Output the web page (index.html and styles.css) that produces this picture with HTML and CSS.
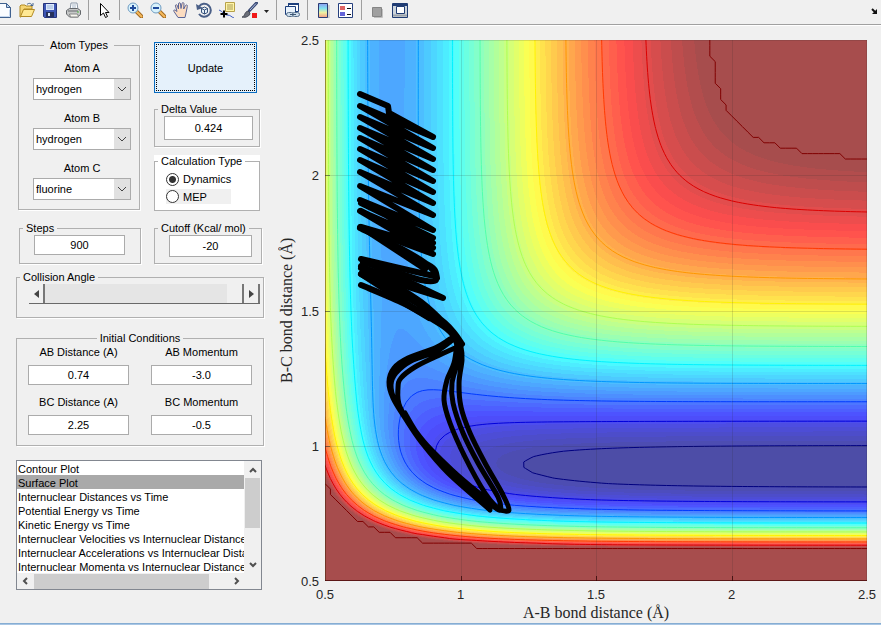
FILE: index.html
```html
<!DOCTYPE html>
<html lang="en">
<head>
<meta charset="utf-8">
<title>Reaction Dynamics</title>
<link rel="stylesheet" href="styles.css">
</head>
<body>
<header class="toolbar">
  <button class="tool" aria-label="New figure"><svg viewBox="0 0 16 16"><path d="M2.500 1.500h8l4 4v10h-12z" fill="#fafcff" stroke="#40618f"/><path d="M10.500 1.500v4h4z" fill="#bcd3ee" stroke="#40618f"/><path d="M4 14.500h9.500v-7" fill="none" stroke="#c5d7ee"/></svg></button>
  <button class="tool" aria-label="Open file"><svg viewBox="0 0 16 16"><path d="M1 4l1-1h4l1 1h6v3H5l-3 8H1z" fill="#f5d573" stroke="#b28b25"/><path d="M1.500 14.500l3-7h11l-3 7z" fill="#ffe994" stroke="#b28b25"/><path d="M8 2.500c2-2 4-1 5 .5m1-2v2.500h-2.500" fill="none" stroke="#46658e"/></svg></button>
  <button class="tool" aria-label="Save figure"><svg viewBox="0 0 16 16"><path d="M1.500 1.500h13v14h-12l-1-1z" fill="#3d56b5" stroke="#26357b"/><path d="M4 2h8v6H4z" fill="#dce9fb"/><path d="M5 4h6M5 6h6" stroke="#9bb4da"/><path d="M4 10h8v5H4z" fill="#26315c"/><path d="M6 11h2v3H6z" fill="#dce9fb"/></svg></button>
  <button class="tool" aria-label="Print figure"><svg viewBox="0 0 16 16"><path d="M5 8L6 1h6l1 7z" fill="#fff" stroke="#8b98a8"/><path d="M7 3h4M7 5h4" stroke="#a8b8ca"/><path d="M1.500 8.500l3-2h8l3 2v4l-3 2.500h-8l-3-3z" fill="#c6c8c8" stroke="#65686c"/><path d="M3 9h10M4 12.500h8" stroke="#66696d"/><path d="M4.500 12h8l1 3h-8z" fill="#f7f7ef" stroke="#888"/><path d="M12 10h2" stroke="#50b840"/></svg></button>
  <span class="sep"></span>
  <button class="tool" aria-label="Edit plot"><svg viewBox="0 0 16 16"><path d="M4.500 1.500v12l3-2.500 2 4.500 2-1-2-4h3.500z" fill="#fff" stroke="#000"/></svg></button>
  <span class="sep"></span>
  <button class="tool" aria-label="Zoom in"><svg viewBox="0 0 16 16"><path d="M9.500 9.500l5 5" stroke="#a36a20" stroke-width="4" stroke-linecap="round"/><path d="M9.500 9.500l5 5" stroke="#f5b95c" stroke-width="2" stroke-linecap="round"/><circle cx="6" cy="6" r="5" fill="#d8f2fc" stroke="#6f9cc2"/><path d="M3 6h6M6 3v6" stroke="#204b9c" stroke-width="2"/></svg></button>
  <button class="tool" aria-label="Zoom out"><svg viewBox="0 0 16 16"><path d="M9.500 9.500l5 5" stroke="#a36a20" stroke-width="4" stroke-linecap="round"/><path d="M9.500 9.500l5 5" stroke="#f5b95c" stroke-width="2" stroke-linecap="round"/><circle cx="6" cy="6" r="5" fill="#d8f2fc" stroke="#6f9cc2"/><path d="M3 6h6" stroke="#204b9c" stroke-width="2"/></svg></button>
  <button class="tool" aria-label="Pan"><svg viewBox="0 0 16 16"><path d="M5 15.500L1 9.500C0 7.500 2 7.500 4 9.500L2.500 4c-.3-1.700 1.500-1.700 2 0l1 3L5.500 2c0-1.700 2-1.700 2 0l.5 4.500L9 1.500c.3-1.500 2-1.200 2 .5l-.3 5L12.500 3.500c1-1.200 2.200-.5 1.800 1L13 11l-1 4.500z" fill="#fcdcc0" stroke="#5a6597"/></svg></button>
  <button class="tool" aria-label="Rotate 3D"><svg viewBox="0 0 16 16"><path d="M3 4.500A6.500 6.500 0 1 1 3 12" fill="none" stroke="#4a5f87" stroke-width="2"/><path d="M0 2l1 6 6-2z" fill="#4a5f87"/><path d="M5.500 6.500l3-1.500 3 1.500v4l-3 1.500-3-1.500zM5.500 6.500l3 1.500 3-1.500M8.500 8v4" fill="#e6f0f8" stroke="#36527c"/></svg></button>
  <button class="tool" aria-label="Data cursor"><svg viewBox="0 0 16 16"><path d="M6.500.5h9v9h-9z" fill="#fff6a8" stroke="#b7a14a"/><path d="M8 3h6M8 5h6M8 7h6" stroke="#a99b58"/><path d="M0 8c4 1 4 5 8 5s4 2 7 3" fill="none" stroke="#3857c0"/><path d="M5 8.500v7M1.500 12h7" stroke="#000" stroke-width="2"/></svg></button>
  <button class="tool" aria-label="Brush data"><svg viewBox="0 0 16 16"><path d="M14.500 1L7.500 8.500" stroke="#3a4a74" stroke-width="3" stroke-linecap="round"/><path d="M14 1.500L8 8" stroke="#aebde0"/><path d="M0 15c3 0 2-5 6-6l2 2c0 3-4 5-8 4z" fill="#6a6e78" stroke="#454954"/><path d="M10 11h5v5h-5z" fill="#f01818"/></svg></button>
  <button class="tool tool-caret" aria-label="Brush colors"><svg viewBox="0 0 6 16"><path d="M0 8h5L2.500 11z" fill="#222"/></svg></button>
  <span class="sep"></span>
  <button class="tool" aria-label="Link plot"><svg viewBox="0 0 16 16"><path d="M4.500 1.500h10v8h-10z" fill="#fff" stroke="#1c3f7c"/><path d="M4 2h11" stroke="#1c3f7c" stroke-width="2"/><path d="M1.500 4.500h10v8h-10z" fill="#eaf3fc" stroke="#1c3f7c"/><rect x="2.500" y="10.500" width="7" height="4" rx="2" fill="#cdddeb" stroke="#56708c"/><rect x="8.500" y="10.500" width="7" height="4" rx="2" fill="#cdddeb" stroke="#56708c"/><path d="M6 12.500h6" stroke="#3f5873"/></svg></button>
  <span class="sep"></span>
  <button class="tool" aria-label="Insert colorbar"><svg viewBox="0 0 16 16"><defs><linearGradient id="bar" x2="0" y2="1"><stop offset="0" stop-color="#8e9df2"/><stop offset=".35" stop-color="#82e2f0"/><stop offset=".65" stop-color="#eef0a0"/><stop offset="1" stop-color="#f39a86"/></linearGradient></defs><path d="M4 16h10V3" fill="none" stroke="#b5b5b5"/><path d="M3.500 1.500h9v14h-9z" fill="url(#bar)" stroke="#2b3c72"/></svg></button>
  <button class="tool" aria-label="Insert legend"><svg viewBox="0 0 16 16"><path d="M.5 1.500h14v14H.5z" fill="#fff" stroke="#26407e"/><path d="M2 4h5v4H2z" fill="#de6464"/><path d="M2 10h5v4H2z" fill="#6464d8"/><path d="M9 6.500h4M9 12.500h4" stroke="#111"/></svg></button>
  <span class="sep"></span>
  <button class="tool" aria-label="Hide plot tools"><svg viewBox="0 0 16 16"><path d="M3.500 5.500h9v9h-9z" fill="#a0a0a0" stroke="#858585"/><path d="M13.500 7v8.500H5" fill="none" stroke="#c0c0c0"/></svg></button>
  <button class="tool" aria-label="Show plot tools and dock figure"><svg viewBox="0 0 16 16"><path d="M.5 1.500h15v14H.5z" fill="#cdd5dc" stroke="#203c73"/><path d="M0 3h16" stroke="#203c73" stroke-width="2"/><path d="M4.500 4.500h8v7h-8z" fill="#fff" stroke="#203c73"/><path d="M1 13.500h14" stroke="#9ca3aa" stroke-width="2"/></svg></button>
  <button class="tool dock" aria-label="Dock figure"><svg viewBox="0 0 16 16"><path d="M7 7l3 3" stroke="#111" stroke-width="2"/><path d="M12 7v5H7z" fill="#111"/></svg></button>
</header>

<main class="window">
  <form class="controls">
    <div class="top">
      <fieldset class="atoms">
        <legend>Atom Types</legend>
        <div class="body">
          <div class="atom">
            <label for="atomA">Atom A</label>
            <span class="drop"><select id="atomA"><option>hydrogen</option></select><span class="arrow"><svg viewBox="0 0 10 6"><path d="M1 1l4 4 4-4"/></svg></span></span>
          </div>
          <div class="atom">
            <label for="atomB">Atom B</label>
            <span class="drop"><select id="atomB"><option>hydrogen</option></select><span class="arrow"><svg viewBox="0 0 10 6"><path d="M1 1l4 4 4-4"/></svg></span></span>
          </div>
          <div class="atom">
            <label for="atomC">Atom C</label>
            <span class="drop"><select id="atomC"><option>fluorine</option></select><span class="arrow"><svg viewBox="0 0 10 6"><path d="M1 1l4 4 4-4"/></svg></span></span>
          </div>
        </div>
      </fieldset>
      <div class="side">
        <button type="button" class="update"><span>Update</span></button>
        <fieldset class="delta">
          <legend>Delta Value</legend>
          <div class="body"><input class="field" type="text" value="0.424" aria-label="Delta value"></div>
        </fieldset>
        <fieldset class="calc">
          <legend>Calculation Type</legend>
          <div class="body">
            <label class="choice"><input type="radio" name="calc" checked>Dynamics</label>
            <label class="choice choice-plain"><input type="radio" name="calc">MEP</label>
          </div>
        </fieldset>
      </div>
    </div>
    <div class="pair">
      <fieldset>
        <legend>Steps</legend>
        <div class="body"><input class="field" type="text" value="900" aria-label="Steps"></div>
      </fieldset>
      <fieldset class="cutoff">
        <legend>Cutoff (Kcal/ mol)</legend>
        <div class="body"><input class="field" type="text" value="-20" aria-label="Cutoff"></div>
      </fieldset>
    </div>
    <fieldset class="angle">
      <legend>Collision Angle</legend>
      <div class="slider">
        <button type="button" aria-label="Decrease angle"><svg viewBox="0 0 5 8"><path d="M5 0v8L0 4z"/></svg></button>
        <input type="range" min="0" max="180" value="180" aria-label="Collision angle">
        <button type="button" aria-label="Increase angle"><svg viewBox="0 0 5 8"><path d="M0 0v8l5-4z"/></svg></button>
      </div>
    </fieldset>
    <fieldset class="initial">
      <legend>Initial Conditions</legend>
      <div class="conditions">
        <label>AB Distance (A)<input class="field" type="text" value="0.74"></label>
        <label>AB Momentum<input class="field" type="text" value="-3.0"></label>
        <label>BC Distance (A)<input class="field" type="text" value="2.25"></label>
        <label>BC Momentum<input class="field" type="text" value="-0.5"></label>
      </div>
    </fieldset>
    <div class="list">
      <select size="8" aria-label="Plot type">
        <option>Contour Plot</option>
        <option selected>Surface Plot</option>
        <option>Internuclear Distances vs Time</option>
        <option>Potential Energy vs Time</option>
        <option>Kinetic Energy vs Time</option>
        <option>Internuclear Velocities vs Internuclear Distance</option>
        <option>Internuclear Accelerations vs Internuclear Distance</option>
        <option>Internuclear Momenta vs Internuclear Distance</option>
      </select>
      <div class="vbar"><svg viewBox="0 0 8 6"><path d="M1 5l3-3 3 3"/></svg><i></i><svg viewBox="0 0 8 6"><path d="M1 1l3 3 3-3"/></svg></div>
      <div class="hbar"><svg viewBox="0 0 6 8"><path d="M5 1L2 4l3 3"/></svg><i></i><svg viewBox="0 0 6 8"><path d="M1 1l3 3-3 3"/></svg></div>
    </div>
  </form>

  <section class="chart">
    <div class="ylabel">B-C bond distance (Å)</div>
    <div class="yticks"><span>2.5</span><span>2</span><span>1.5</span><span>1</span><span>0.5</span></div>
    <canvas id="surface"></canvas>
    <div class="xticks"><span>0.5</span><span>1</span><span>1.5</span><span>2</span><span>2.5</span></div>
    <div class="xlabel">A-B bond distance (Å)</div>
  </section>
</main>
<footer class="edge"></footer>
<script src="plot.js"></script>
</body>
</html>
```

FILE: styles.css
```css
* { box-sizing: border-box; }
body {
  margin: 0;
  min-height: 100vh;
  display: flex;
  flex-direction: column;
  background: #f0f0f0;
  color: #000;
  font: 11px/14px "Liberation Sans", Arial, sans-serif;
  overflow-x: hidden;
}
button, input, select { font: inherit; color: inherit; margin: 0; }

.toolbar {
  display: flex;
  height: 26px;
  margin-left: -8px;
  padding-bottom: 5px;
  border-bottom: 1px solid #fff;
  box-shadow: inset 0 -1px #a0a0a0;
}
.tool { width: 23px; padding: 0; border: 0; background: none; display: grid; place-items: center; flex: none; }
.tool svg { width: 16px; height: 16px; }
.tool-caret { width: 11px; }
.tool-caret svg { width: 6px; }
.dock { margin-left: auto; width: 16px; }
.sep { width: 8px; background: linear-gradient(#a0a0a0, #a0a0a0) center / 1px 100% no-repeat; }

.window { flex: 1; display: grid; grid-template-columns: 264px minmax(0, 1fr); }
.controls { padding: 12px 0 0 16px; }

fieldset {
  margin: 0;
  padding: 0;
  min-width: 0;
  border: 1px solid #b0b0b0;
  box-shadow: 1px 1px #fff;
}
legend { padding: 0 3px; margin-left: 3px; white-space: nowrap; }
.field {
  display: block;
  width: 100%;
  height: 22px;
  padding: 0;
  border: 1px solid #ababab;
  background: #fff;
  text-align: center;
}

.top { display: grid; grid-template-columns: 124px 106px; gap: 14px; }
.atoms { height: 172px; margin-left: 2px; }
.atoms .body { padding: 9px 8px 0 14px; }
.atoms legend { margin: 0 auto; padding: 0 6px; }
.atom { display: grid; gap: 3px; margin-bottom: 11px; text-align: center; }
.drop { display: grid; grid-template-columns: 1fr 17px; height: 22px; }
.drop select {
  grid-area: 1 / 1 / 2 / 3;
  appearance: none;
  padding: 0 2px;
  border: 1px solid #ababab;
  border-radius: 0;
  background: #fff;
}
.arrow {
  grid-area: 1 / 2;
  display: grid;
  place-items: center;
  border: 1px solid #ababab;
  border-left: 0;
  background: #e1e1e1;
  pointer-events: none;
}
.arrow svg { width: 10px; height: 6px; fill: none; stroke: #444; }

.side { display: flex; flex-direction: column; padding-top: 4px; }
.update {
  height: 51px;
  margin-right: 3px;
  padding: 1px;
  border: 1px solid #0a6cc0;
  background: #e5f1fb;
}
.update span { display: grid; place-items: center; height: 100%; border: 1px dotted #000; }
.delta { height: 45px; margin-top: 9px; }
.delta .body { padding: 0 6px 0 9px; }
.delta .field { height: 24px; }
.calc { height: 57px; margin-top: 7px; background: #fff; box-shadow: 0 -6px #fff; }
.calc .body { padding: 3px 10px 0 11px; }
.choice { display: flex; align-items: center; gap: 4px; height: 16px; margin-bottom: 2px; }
.choice-plain { width: 65px; height: 15px; background: #f0f0f0; }
.choice input {
  appearance: none;
  width: 13px;
  height: 13px;
  border: 1px solid #333;
  border-radius: 50%;
  background: #fff;
}
.choice input:checked { background: radial-gradient(circle, #333 3px, #fff 4px); }

.pair { display: grid; grid-template-columns: 122px 108px; gap: 13px; margin: 10px 0 0 3px; }
.pair fieldset { height: 43px; }
.pair .body { padding: 0 15px 0 14px; }
.pair .cutoff .body { padding: 0 9px 0 14px; }
.pair .field { height: 20px; }
.pair .cutoff .field { height: 22px; }

.angle { height: 48px; margin-top: 6px; }
.slider { display: grid; grid-template-columns: 16px 1fr 16px; height: 20px; margin: 0 3px 0 12px; border-bottom: 1px solid #696969; }
.slider button {
  display: grid;
  place-items: center;
  padding: 0;
  border: 0;
  border-right: 2px solid #777;
  background: #f0f0f0;
}
.slider svg { width: 5px; height: 8px; fill: #444; }
.slider input { appearance: none; width: 100%; height: 19px; background: #e5e5e5; }
.slider input::-webkit-slider-thumb { appearance: none; width: 17px; height: 19px; background: #f0f0f0; border-right: 2px solid #777; }

.initial { height: 115px; margin-top: 13px; }
.initial legend { margin: 0 auto; }
.conditions { display: grid; grid-template-columns: 101px 101px; gap: 10px 22px; padding: 0 11px; }
.conditions label { display: grid; gap: 6px; text-align: center; }
.conditions .field { height: 20px; }

.list {
  display: grid;
  grid-template: 112px 16px / 1fr 17px;
  width: 246px;
  margin-top: 14px;
  border: 1px solid #828790;
  background: #f0f0f0;
}
.list select { padding: 0; border: 0; border-radius: 0; outline: 0; background: #fff; overflow: hidden; scrollbar-width: none; min-width: 0; height: 112px; }
.list option { padding: 2px 1px 0; min-height: 14px; height: 14px; line-height: 12px; }
.list option:checked { background: #a9a9a9 linear-gradient(#a9a9a9, #a9a9a9); color: #000; }
.list svg { fill: none; stroke: #505050; stroke-width: 2; }
.vbar { display: flex; flex-direction: column; align-items: center; gap: 5px; padding: 6px 0 5px; }
.vbar svg { width: 8px; height: 6px; }
.vbar i { width: 15px; height: 50px; margin-bottom: auto; background: #cdcdcd; }
.hbar { display: flex; align-items: center; gap: 6px; padding: 0 4px 0 5px; }
.hbar svg { width: 6px; height: 8px; }
.hbar i { width: 175px; height: 15px; margin-right: auto; background: #cdcdcd; }

.chart {
  display: grid;
  grid-template: minmax(0, 1fr) 23px 18px / 18px 23px minmax(0, 1fr);
  padding: 14px 14px 1px 14px;
  column-gap: 3px;
  color: #262626;
}
.chart canvas { grid-area: 1 / 3; width: 100%; height: 100%; display: block; }
.ylabel { grid-area: 1 / 1; writing-mode: vertical-rl; transform: rotate(180deg); text-align: center; }
.ylabel, .xlabel { font: 16px/18px "Liberation Serif", serif; }
.xlabel { grid-area: 3 / 3; text-align: center; }
.yticks {
  grid-area: 1 / 2;
  display: flex;
  flex-direction: column;
  justify-content: space-between;
  margin: -7px 3px -9px 0;
  text-align: right;
  font-size: 13px;
  line-height: 16px;
}
.xticks {
  grid-area: 2 / 3;
  display: flex;
  justify-content: space-between;
  margin: 6px -15px 0;
  text-align: center;
  font-size: 13px;
  line-height: 16px;
}
.xticks span { width: 30px; }

.edge { height: 2px; background: #a9c6e4; border-top: 1px solid #86add3; }
```

FILE: plot.js
```js
// LEPS potential for collinear H-H-F, energies in kcal/mol, distances in angstrom.
const HH = { d: 109.5, b: 1.942, r: 0.742, s: 0.19 };
const HF = { d: 141.3, b: 2.219, r: 0.917, s: 0.182 };
const LOW = -137.2, CUTOFF = -22.3, LEVELS = 11;

function terms(m, r) {
  const e = Math.exp(-m.b * (r - m.r));
  const k = m.d / 4 / (1 + m.s);
  return [
    k * ((3 + m.s) * e * e - (2 + 6 * m.s) * e),
    k * ((1 + 3 * m.s) * e * e - (6 + 2 * m.s) * e)
  ];
}

function energy(ab, bc) {
  const [q1, j1] = terms(HH, ab);
  const [q2, j2] = terms(HF, bc);
  const [q3, j3] = terms(HF, ab + bc);
  const x = (j1 - j2) ** 2 + (j2 - j3) ** 2 + (j3 - j1) ** 2;
  return q1 + q2 + q3 - Math.sqrt(x / 2);
}

function jet(t) {
  const c = o => Math.max(0, Math.min(1, 1.5 - Math.abs(4 * t - o)));
  return [c(3), c(2), c(1)].map(v => Math.round(255 * v));
}

// Trajectory in a 542 x 541 space.
const left = [54, 66, 77, 88, 98, 109, 120, 132, 146, 160, 171, 187];
const right = [97, 108, 119, 130, 141, 152, 163, 175, 190, 203, 214];
const zigzag = [];
left.forEach((y, i) => {
  zigzag.push([35, y]);
  if (i === 0) zigzag.push([63, 66], [64, 73]);
  if (i < right.length) zigzag.push([108, right[i]]);
});
const lines = [
  zigzag,
  [[36, 163], [108, 198]],
  [[36, 171], [108, 208], [36, 187], [108, 214]],
  [[36, 187], [100, 229]],
  [[36, 219], [80, 240], [118, 258], [80, 246], [36, 226]],
  [[36, 234], [104, 278], [60, 250]],
  [[36, 219], [70, 227], [109, 236]],
  [[104, 278], [64, 254]]
];

const curves = [
  [[36, 245], [80, 264], [115, 284], [127, 294], [134, 308]],
  [[36, 234], [70, 251], [100, 268], [120, 283], [130, 294], [137, 304]],
  [[36, 228], [66, 243], [96, 262], [120, 284], [130, 297]],
  [[35, 188], [75, 208], [104, 226], [111, 240], [96, 240], [74, 233], [38, 222]],
  [[96, 221], [109, 229], [112, 238]],
  [[131, 296], [125, 299], [110, 308], [83, 318], [69, 328], [64, 342], [68, 358], [80, 378], [97, 403], [123, 433], [165, 470]],
  [[130, 298], [112, 311], [86, 321], [71, 333], [66, 345], [70, 361], [86, 385], [108, 414], [150, 453], [172, 469]],
  [[132, 307], [110, 317], [90, 327], [76, 338], [73, 348], [75, 367], [93, 395], [127, 430], [160, 458], [176, 470]],
  [[80, 373], [92, 393], [108, 412], [135, 440], [164, 468]],
  [[132, 303], [129, 323], [122, 340], [119, 360], [125, 383], [140, 417], [160, 453], [174, 470]],
  [[133, 303], [133, 320], [127, 343], [128, 363], [138, 393], [153, 423], [173, 457], [176, 470]],
  [[132, 298], [136, 307], [137, 320], [134, 343], [136, 367], [145, 393], [160, 423], [177, 453], [184, 470], [174, 470]]
];

function drawField(ctx, w, h) {
  const img = ctx.createImageData(w, h);
  const bands = 60;
  for (let y = 0; y < h; y++) {
    for (let x = 0; x < w; x++) {
      const v = energy(0.5 + 2 * x / w, 2.5 - 2 * y / h);
      let t = (Math.min(v, CUTOFF) - LOW) / (CUTOFF - LOW);
      t = Math.min(1, Math.max(0, Math.floor(t * bands) + 1) / bands);
      const c = jet(t);
      const o = 4 * (y * w + x);
      for (let k = 0; k < 3; k++) img.data[o + k] = 77 + 0.7 * c[k];
      img.data[o + 3] = 255;
    }
  }
  ctx.putImageData(img, 0, 0);
}

function drawContours(ctx, w, h) {
  const n = 100;
  const grid = [];
  for (let j = 0; j <= n; j++) {
    grid.push([]);
    for (let i = 0; i <= n; i++) {
      grid[j].push(Math.min(CUTOFF, energy(0.5 + 2 * i / n, 2.5 - 2 * j / n)));
    }
  }
  const corners = [[0, 0], [1, 0], [1, 1], [0, 1]];
  ctx.lineWidth = 1;
  for (let k = 0; k <= LEVELS; k++) {
    const level = LOW + (CUTOFF - LOW) * k / LEVELS - (k === LEVELS ? 1e-6 : 0);
    ctx.strokeStyle = `rgb(${jet(k / LEVELS)})`;
    ctx.beginPath();
    for (let j = 0; j < n; j++) {
      for (let i = 0; i < n; i++) {
        const pts = [];
        for (let e = 0; e < 4; e++) {
          const [ax, ay] = corners[e], [bx, by] = corners[(e + 1) % 4];
          const a = grid[j + ay][i + ax], b = grid[j + by][i + bx];
          if ((a < level) !== (b < level)) {
            const t = (level - a) / (b - a);
            pts.push([(i + ax + t * (bx - ax)) * w / n, (j + ay + t * (by - ay)) * h / n]);
          }
        }
        for (let p = 0; p + 1 < pts.length; p += 2) {
          ctx.moveTo(...pts[p]);
          ctx.lineTo(...pts[p + 1]);
        }
      }
    }
    ctx.stroke();
  }
}

function smooth(ctx, p) {
  ctx.moveTo(...p[0]);
  for (let i = 0; i < p.length - 1; i++) {
    const a = p[i - 1] || p[i], b = p[i], c = p[i + 1], d = p[i + 2] || c;
    ctx.bezierCurveTo(
      b[0] + (c[0] - a[0]) / 6, b[1] + (c[1] - a[1]) / 6,
      c[0] - (d[0] - b[0]) / 6, c[1] - (d[1] - b[1]) / 6,
      c[0], c[1]);
  }
}

function drawTrajectory(ctx, w, h) {
  ctx.save();
  ctx.scale(w / 542, h / 541);
  ctx.strokeStyle = '#000';
  ctx.lineJoin = ctx.lineCap = 'round';
  ctx.lineWidth = 6;
  ctx.beginPath();
  lines.forEach(line => {
    ctx.moveTo(...line[0]);
    line.forEach(p => ctx.lineTo(...p));
  });
  ctx.stroke();
  ctx.beginPath();
  curves.slice(0, 5).forEach(p => smooth(ctx, p));
  ctx.stroke();
  ctx.lineWidth = 5;
  ctx.beginPath();
  curves.slice(5).forEach(p => smooth(ctx, p));
  ctx.stroke();
  ctx.restore();
}

function drawAxes(ctx, w, h) {
  for (let k = 1; k < 4; k++) {
    const x = Math.round(w * k / 4), y = Math.round(h * k / 4);
    ctx.fillStyle = 'rgba(38,38,38,.15)';
    ctx.fillRect(x, 0, 1, h);
    ctx.fillRect(0, y, w, 1);
    ctx.fillStyle = 'rgba(38,0,0,.7)';
    ctx.fillRect(x, h - 5, 1, 5);
    ctx.fillStyle = 'rgba(38,38,38,.5)';
    ctx.fillRect(0, y, 5, 1);
  }
  ctx.fillStyle = 'rgba(38,38,38,.15)';
  ctx.fillRect(0, 0, w, 1);
  ctx.fillRect(w - 1, 0, 1, h);
  ctx.fillStyle = 'rgba(60,30,0,.5)';
  ctx.fillRect(0, 0, 1, h);
  ctx.fillStyle = 'rgba(60,0,0,.7)';
  ctx.fillRect(0, h - 1, w, 1);
}

function draw() {
  const canvas = document.getElementById('surface');
  const w = canvas.width = canvas.clientWidth;
  const h = canvas.height = canvas.clientHeight;
  const ctx = canvas.getContext('2d');
  drawField(ctx, w, h);
  drawContours(ctx, w, h);
  drawAxes(ctx, w, h);
  drawTrajectory(ctx, w, h);
}

draw();
window.addEventListener('resize', draw);
```
